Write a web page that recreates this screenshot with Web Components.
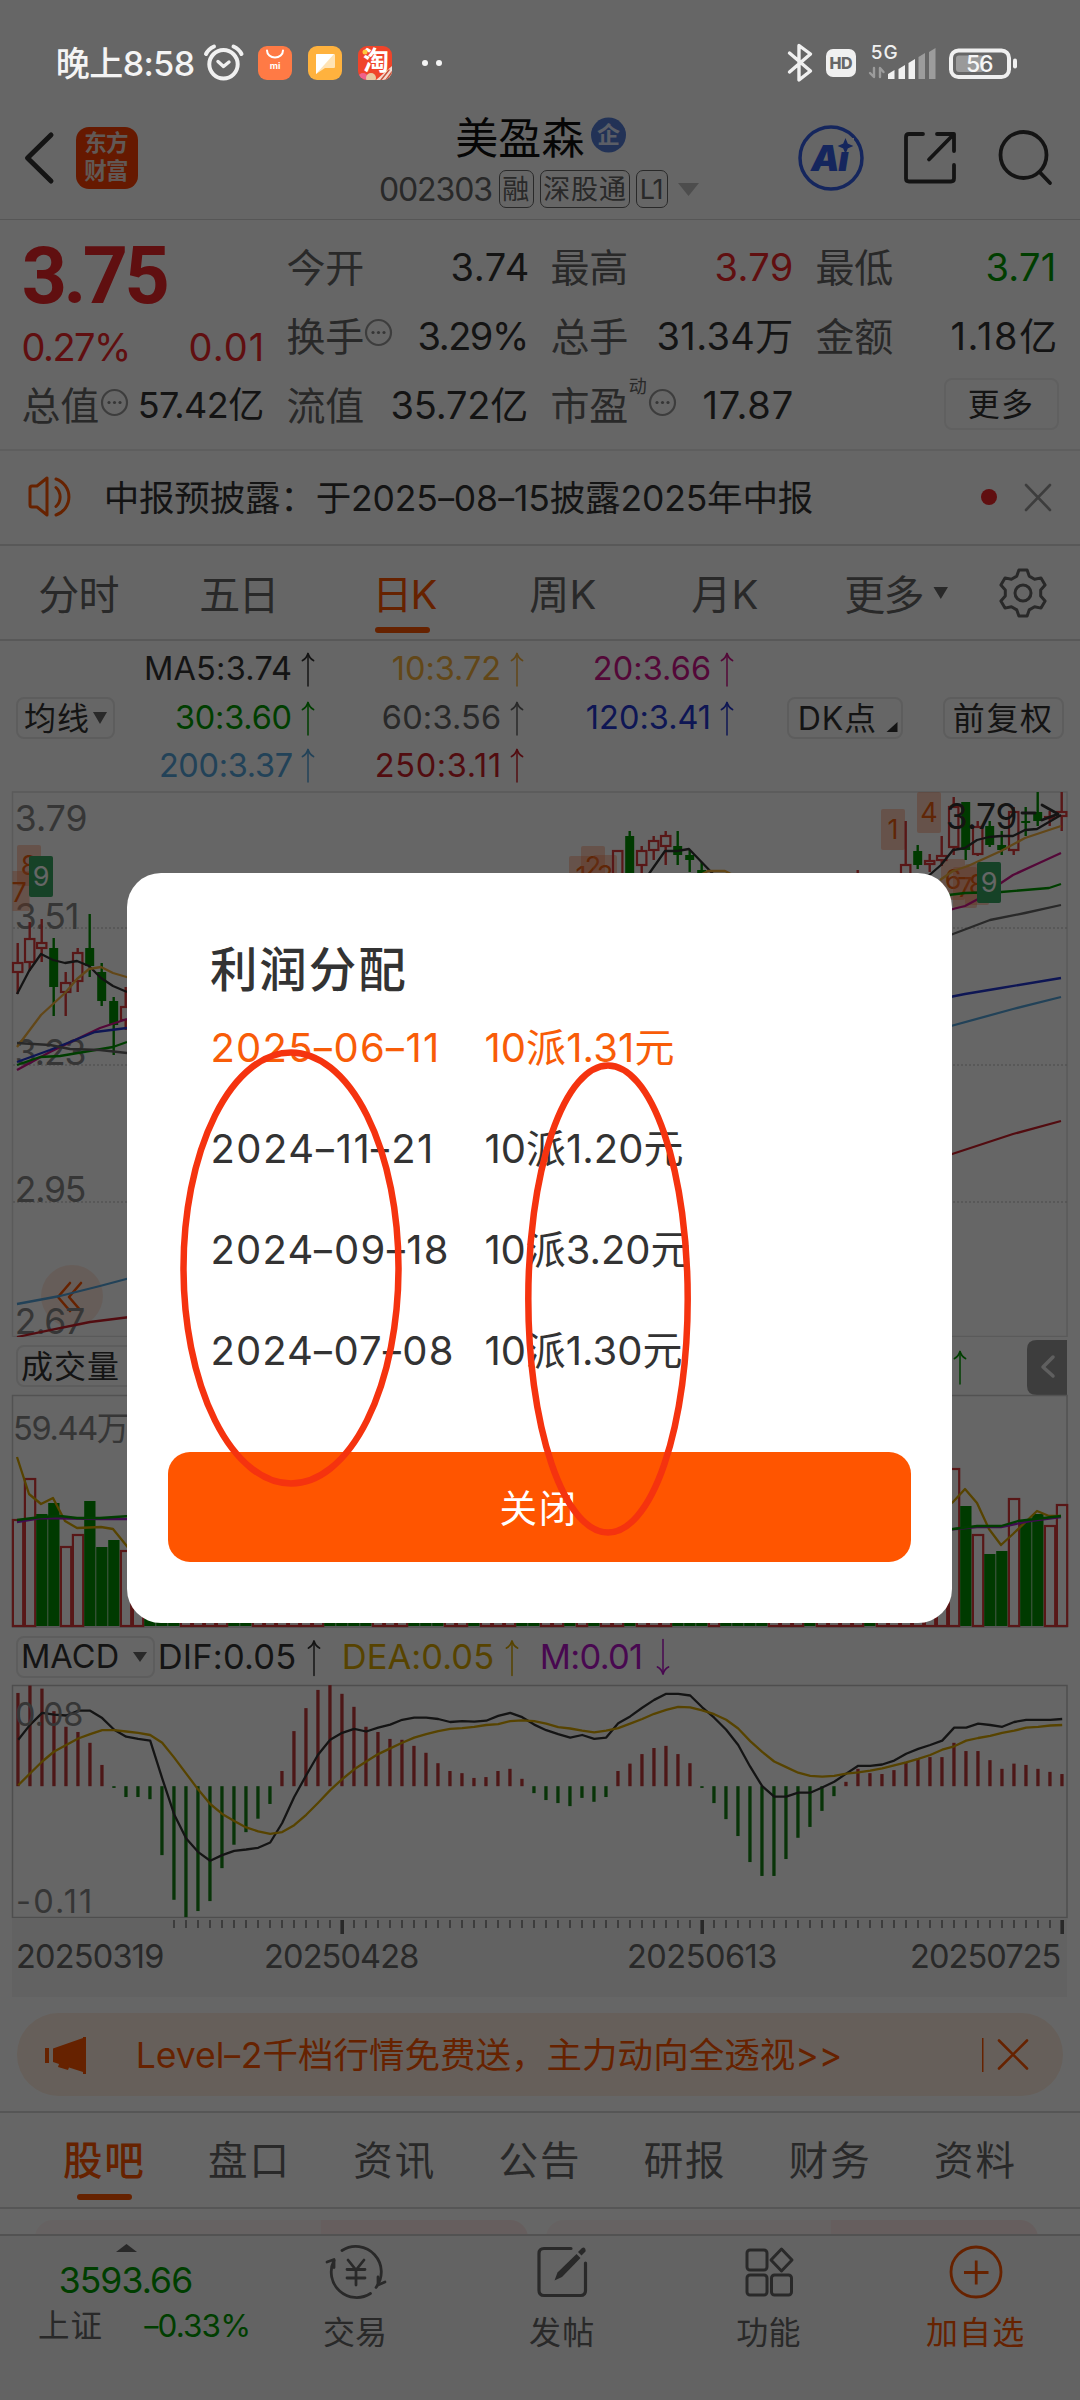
<!DOCTYPE html>
<html lang="zh-CN">
<head>
<meta charset="utf-8">
<title>美盈森 002303</title>
<style>
html,body{margin:0;padding:0;background:#fff}
body{width:1080px;height:2400px;overflow:hidden;font-family:Inter,"Noto Sans CJK SC",sans-serif}
</style>
</head>
<body>
<stock-page></stock-page>
<script>
const FONT = 'Inter,"Noto Sans CJK SC",sans-serif';
const INK='#333', SUB='#666', RED='#f0262a', GREEN='#009c00', ORANGE='#ff5500', YEL='#f5b13d', GOLD='#d9a800',
      PINK='#d0148c', BLUE='#2337d2', SKY='#55a5dc', CRIM='#cc1f2a', LAB='#888';

/* A run of text fitted to a given width by letter spacing */
class TRun extends HTMLElement {
  constructor(){ super(); this.attachShadow({mode:'open'}).innerHTML =
    `<style>:host{display:block;flex:none;white-space:nowrap;font-family:${FONT};line-height:1;font-variant-ligatures:none}span{display:inline-block}</style><span><slot></slot></span>`; }
  connectedCallback(){
    const span=this.shadowRoot.querySelector('span'), w=+this.getAttribute('w');
    const n=[...this.textContent].length;
    if(n>1) span.style.letterSpacing=((w-span.getBoundingClientRect().width)/(n-1)).toFixed(3)+'px';
  }
}
customElements.define('t-run',TRun);

/* T: text item, G: drawing item, B: boxed button item; row() lays them along a line */
const wide=t=>t.replace(/-/g,'<b style="display:inline-block;font-weight:inherit;transform:scaleX(1.4)">-</b>');
const T=(t,x,w,s,c=INK,o={})=>({x:x-.065*s,w:w+.1*s,f:()=>`<t-run w="${w+.1*s}" style="width:${w+.1*s}px;font-size:${s}px;color:${c};font-weight:${o.b||400};margin-top:${2*(o.dy??1)}px${o.ff?';font-family:'+o.ff:''}">${wide(t)}</t-run>`});
const G=(x,w,h,inner)=>({x,w,f:cy=>`<svg width="${w}" height="${h}" viewBox="${x} ${cy-h/2} ${w} ${h}">${inner}</svg>`});
const B=(x,w,h,inner)=>({x,w,f:cy=>`<div class="btn" style="width:${w}px;height:${h}px">${items(x+2,inner,cy)}</div>`});
function items(x0,list,cy){
  let e=x0; return list.map(i=>{const m=i.x-e; e=i.x+i.w; return `<div class="it" style="margin-left:${m.toFixed(2)}px;width:${i.w}px">${i.f(cy)}</div>`}).join('');
}
const row=(cy,h,list,x0=0)=>`<div class="row" style="height:${h}px">${items(x0,list,cy)}</div>`;
const CSS=`<style>:host{display:block;flex:none}*{box-sizing:border-box}.row{display:flex;align-items:center}.it{flex:none;display:flex;align-items:center}
svg{display:block;flex:none;overflow:visible}.btn{display:flex;align-items:center;border:2px solid #e8e8e8;border-radius:8px}
text{font-family:${FONT};font-variant-ligatures:none}</style>`;
const def=(name,html,css='')=>customElements.define(name,class extends HTMLElement{
  constructor(){super();this.attachShadow({mode:'open'}).innerHTML=CSS+`<style>${css}</style>`+(typeof html==='function'?html():html);}
});
const P=(d,c,w=3,x='')=>`<path d="${d}" fill="none" stroke="${c}" stroke-width="${w}" stroke-linecap="round" stroke-linejoin="round" ${x}/>`;
const F=(d,c,x='')=>`<path d="${d}" fill="${c}" ${x}/>`;
const L=(p,c,w=2.3)=>`<polyline points="${p}" fill="none" stroke="${c}" stroke-width="${w}" stroke-linejoin="round"/>`;
const ST=(t,x,cy,w,s,c,b=400)=>`<text x="${x-.06*s}" y="${cy+.364*s}" font-size="${s}" fill="${c}" font-weight="${b}" textLength="${w+.1*s}">${t}</text>`;
const R=(x,y,w,h,c,r=0,o='')=>`<rect x="${x}" y="${y}" width="${w}" height="${h}" rx="${r}" fill="${c}" ${o}/>`;
const C=(x,y,r,c,w)=>`<circle cx="${x}" cy="${y}" r="${r}" fill="none" stroke="${c}" stroke-width="${w}"/>`;
const D=(x,y,r,c)=>`<circle cx="${x}" cy="${y}" r="${r}" fill="${c}"/>`;

/* ---------- system status bar ---------- */
def('status-bar',()=>row(63,126,[
  T('晚上8:58',58,136,34,'#f4f4f4',{b:500}),
  G(203,42,44,C(223.5,64.3,14.2,'#f0f0f0',4)+P('M218 61.5l5.5 5 5.5-4.5','#f0f0f0',3.4)+P('M206 54q2.5-5 8-7.5M241.500 54q-2.500-5-8-7.500','#f0f0f0',4)),
  G(258,34,34,R(258,46,34,34,'#ff7a45',9)+P('M267 50.500a8 7 0 0 0 16 0','#fff',2)+`<text x="275" y="69" font-size="9" font-weight="700" text-anchor="middle" fill="#fff">mi</text>`),
  G(308,34,34,R(308,46,34,34,'#ffb23e',9)+F('M316 55q0-1 1-1h17q1 0 1 1v12q0 1-1 1h-9l-9 6z','#ffe3b5')+F('M316 55q0-1 1-1h17l-18 20z','#fff')),
  G(358,34,34,`<clipPath id="tb"><rect x="358" y="46" width="34" height="34" rx="9"/></clipPath><g clip-path="url(#tb)">`+R(358,46,34,34,'#f0442a')+D(363,78,5,'#f0628a')+D(371,78,5,'#e8c8a0')+F('M376 80l16-14v14z','#f3d9cf')+P('M381 80l8-10M386 80l6-8','#c8553c',1.500)+`</g><text x="376" y="69.500" font-size="26" font-weight="600" text-anchor="middle" fill="#fff">淘</text>`+D(365,52,2.500,'#ffc83d')),
  G(421,22,8,D(425,63,3,'#f4f4f4')+D(439,63,3,'#f4f4f4')),
  G(787,26,42,P('M789.500 53L810.500 71 799 80V45.500L810.500 54 789.500 72','#f0f0f0',3.400)),
  G(826,30,28,R(826,49,30,28,'#f0f0f0',7)+`<text x="829.500" y="68.800" font-size="16" font-weight="800" fill="#666" textLength="23">HD</text>`),
  G(868,68,48,ST('5G',872,52,25,19,'#f0f0f0',500)+
    P('M874 68v9l-4-4M880 77v-9l3.500 4','#9c9c9c',2.400)+
    [[888,71],[898.500,66],[908.500,60]].map(a=>F(`M${a[0]} 79V${a[1]+3}l6.500-4V79z`,'#f0f0f0')).join('')+
    [[918.500,54],[929,49]].map(a=>F(`M${a[0]} 79V${a[1]+3}l6.500-4V79z`,'#9c9c9c')).join('')),
  G(949,69,31,`<rect x="951" y="50" width="58" height="26.500" rx="7.500" fill="none" stroke="#f0f0f0" stroke-width="4"/>`+R(956,55,28,16.500,'#9a9a9a',3)+R(1013,58,4,10,'#f0f0f0',2)+ST('56',967.500,63.500,25,23,'#f6f6f6',500))
]),`:host{position:absolute;left:0;top:0;width:1080px;height:126px}`);

/* ---------- title bar ---------- */
const tag=(x,w,t,tx,tw)=>({x,w,f:cy=>`<div class="tag" style="width:${w}px">${items(x+1.5,[T(t,tx,tw,27,SUB,{dy:0})],cy)}</div>`});
def('title-bar',()=>`<div class="bar"><div class="side">${row(158,122,[
  G(24,32,52,P('M51 135L27.500 158 51 181',INK,5)),
  G(76,62,62,R(76,127,62,62,'#ff4000',13)+ST('东方',85.500,143,42,22.5,'#f2ddd5',700)+ST('财富',85.500,171,42,22.5,'#f2ddd5',700))
])}</div><div class="mid">${row(137,80,[
  T('美盈森',458,125,43,'#111'),
  G(591,36,36,D(608.500,135,17.500,'#557ed8')+`<text x="608.500" y="143" font-size="23" font-weight="600" text-anchor="middle" fill="#e4ecff">企</text>`)
],370)}${row(189,24,[T('002303',381,111,32,SUB),tag(499.500,35,'融',504.500,25),tag(540,90,'深股通',545.500,80),tag(636,32,'L1',642,21),G(678,21,14,F('M678 183h21l-10.500 13z','#c0c0c0'))],370)}</div><div>${row(158,122,[
  G(800,62,64,C(831,158,31,'#3560e8',3.500)+`<text x="811" y="170.500" font-size="36" font-weight="900" font-style="italic" fill="#3560e8" textLength="38">Ai</text>`+R(836,138,18,14,'#fff')+F('M845.500 140l1.800 4.200 4.200 1.800-4.200 1.800-1.800 4.200-1.800-4.200-4.200-1.800 4.200-1.800z','#3560e8','stroke="#3560e8" stroke-width="1.500"')),
  G(904,52,52,P('M923 134H909q-3 0-3 3V178.500q0 3 3 3H951q3 0 3-3V165M937 134H954V151M953 135L929 159.500',INK,3.800)),
  G(998,54,54,C(1023.500,155,23,INK,3.800)+P('M1040 172.500L1050 183',INK,3.800))
],720)}</div></div>`,
`:host{height:220px;padding-top:97px;border-bottom:1.500px solid #d6d6d6}.bar{display:flex;height:121px}.side{width:370px}.mid{width:350px}.tag{display:flex;align-items:center;height:38px;border:1.500px solid #666;border-radius:7px}`);

/* ---------- quote ---------- */
const dots=(x,y)=>G(x-13.500,27,27,C(x,y,12.500,'#999',2.200)+D(x-5.500,y,1.600,'#888')+D(x,y,1.600,'#888')+D(x+5.500,y,1.600,'#888'));
def('quote-panel',()=>`<div class="q"><div class="l">${row(277,114,[T('3.75',27,140,79,RED,{b:700,ff:'Roboto',dy:-1})])}${row(346,24,[T('0.27%',24,106,38,RED),T('0.01',191,72,38,RED)])}${row(404,92,[T('总值',24,74,39,SUB),dots(115,402),T('57.42亿',140,123,36,INK)])}</div>
<div>${row(266,92,[T('今开',289,74,39,SUB),T('3.74',453,75,38),T('最高',553,74,39,SUB),T('3.79',717,75,38,RED),T('最低',818,74,39,SUB),T('3.71',988,67,38,GREEN)],276)}
${row(335,46,[T('换手',289,74,39,SUB),dots(379,332),T('3.29%',420,108,38),T('总手',553,74,39,SUB),T('31.34万',659,133,38),T('金额',818,74,39,SUB),T('1.18亿',953,103,38)],276)}
${row(404,92,[T('流值',289,74,39,SUB),T('35.72亿',393,134,38),T('市盈',553,74,39,SUB),T('动',630,17,18,SUB,{dy:-17}),dots(663,402),T('17.87',705,87,38),B(944,115,52,[T('更多',970,62,32)])],276)}</div></div>`,
`:host{height:229px}.q{display:flex}.l{width:276px}.btn{border-color:#f0f0f0}`);

/* ---------- notice ---------- */
def('notice-bar',()=>row(498,94,[
  G(28,48,40,P('M30 488q0-2 2-2h5l10-8V515l-10-8h-5q-2 0-2-2z',ORANGE,3)+P('M56 487.500a13 13 0 0 1 0 19M56 479a19 19 0 0 1 0 36',ORANGE,3)),
  T('中报预披露：于2025-08-15披露2025年中报',106,706,35.500),
  G(981,16,16,D(989,497,8,RED)),
  G(1025,26,28,P('M1026 485l24 25M1050 485l-24 25','#999',2.600))
]),`:host{height:97px;border-top:2px solid #ececec;border-bottom:2px solid #dcdcdc}`);

/* ---------- chart period tabs ---------- */
const gear=()=>{let p='';for(let k=0;k<6;k++){const a=-90+60*k;for(const [r,d] of [[18,-20],[23.500,-10],[23.500,10],[18,20]]){const t=(a+d)*Math.PI/180;p+=(p?'L':'M')+(1023+r*Math.cos(t)).toFixed(1)+' '+(593+r*Math.sin(t)).toFixed(1);}}return P(p+'z',SUB,3)+C(1023,593,8,SUB,3)};
def('period-tabs',()=>row(586,80,[
  T('分时',41,77,41,SUB,{dy:9}),T('五日',202,76,41,SUB,{dy:9}),T('日K',375,61,40,ORANGE,{dy:9}),T('周K',532,63,40,SUB,{dy:9}),T('月K',694,63,40,SUB,{dy:9}),T('更多',847,76,41,SUB,{dy:9}),
  G(933,15,24,F('M933.500 587h14.500l-7.200 12z',SUB)),G(997,52,80,gear())
])+row(630,8,[G(375,55,6,R(375,627,55,6,ORANGE,3))]),`:host{height:95px;border-bottom:2px solid #dcdcdc}`);

/* ---------- moving averages ---------- */
const arr=(x,cy,c,h=34,down=0)=>G(x-8,16,h,`<g transform="${down?`rotate(180 ${x} ${cy})`:''}">`+P(`M${x} ${cy-h/2+2}V${cy+h/2}`,c,1.500)+P(`M${x-5.500} ${cy-h/2+8.500}q4-2 5.500-7 1.500 5 5.500 7`,c,1.800)+'</g>');
def('ma-legend',()=>row(668,55,[T('MA5:3.74',146,145,32.500),arr(308,668,INK),T('10:3.72',394,106,32.500,YEL),arr(517,668,YEL),T('20:3.66',595,115,32.500,PINK),arr(727,668,PINK)])
+row(717,43,[B(16,99,42,[T('均线',26,62,32),G(93,14,14,F('M93 711h14l-7 12z',SUB))]),T('30:3.60',177,114,32.500,GREEN),arr(308,717,GREEN),T('60:3.56',384,116,32.500,SUB),arr(517,717,SUB),T('120:3.41',588,122,32.500,BLUE),arr(727,717,BLUE),
  B(787,116,42,[T('DK点',800,75,32),G(887,11,22,F('M897.500 721v10h-11z',INK))]),B(943,121,42,[T('前复权',955,96,32)])])
+row(766,52,[T('200:3.37',161,131,32.500,SKY),arr(308,766,SKY),T('250:3.11',377,123,32.500,CRIM),arr(517,766,CRIM)]),
`:host{height:150px}`);

/* ---------- candlestick chart ---------- */
const X=i=>17.7+12*i;
const CR='#dc3a3a', CG='#009200';
function candle(i,red,w0,w1,b0,b1){const x=X(i);
  return red? P(`M${x} ${w0}V${b0}M${x} ${b1}V${w1}`,CR,2.400,'style="stroke-linecap:butt"')+`<rect x="${x-4.700}" y="${b0+1}" width="9.400" height="${Math.max(b1-b0-2,1)}" fill="none" stroke="${CR}" stroke-width="2.200"/>`
  : P(`M${x} ${w0}V${w1}`,CG,2.400,'style="stroke-linecap:butt"')+R(x-4.500,b0,9,b1-b0,CG);}
const badge=(x,y,t,g)=>R(x,y,24,41,g?'#37a563':'#ff8250',2,g?'':'opacity=".4"')+`<text x="${x+12}" y="${y+30}" font-size="27" text-anchor="middle" fill="${g?'#fff':'#f06010'}">${t}</text>`;
def('k-chart',()=>{
  let s=`<svg width="1080" height="546" viewBox="0 791 1080 546" style="overflow:hidden">`;
  s+=`<rect x="12.500" y="792" width="1054.500" height="544.500" fill="none" stroke="#e0e0e0" stroke-width="1.500"/>`;
  for(const y of [928,1065,1202]) s+=`<path d="M13 ${y}H1067" stroke="#bbb" stroke-width="1" stroke-dasharray="2 2"/>`;
  s+=`<circle cx="72" cy="1296" r="31" fill="#ffc8af" opacity=".4"/>`+P('M70 1283l-12 14 12 14M81 1283l-12 14 12 14',ORANGE,2.600);
  [[17,818,69,'3.79'],[17,916,61,'3.51'],[17,1052,68,'3.23'],[17,1189,68,'2.95'],[17,1321,67,'2.67']].forEach(a=>s+=ST(a[3],a[0],a[1],a[2],35.500,LAB));
  s+=badge(17,845,'8')+R(12.500,871,17,40,'#ff8250',0,'opacity=".4"')+`<text x="11.500" y="901.500" font-size="27" fill="#f06010">7</text>`;
  s+=badge(569,856,'1')+badge(581,846,'2')+badge(593,855,'3')+badge(881,809,'1')+badge(917,792,'4')+badge(941,859,'6')+badge(953,867,'7')+badge(965,864,'8');
  [[0,1,943,994,962,973],[1,1,922,971,938,963],[2,1,919,962,942,949],[3,0,938,1016,948,987],[4,1,972,1016,982,993],[5,1,948,992,952,982],[6,0,914,977,948,966],[7,0,963,1006,972,1001],[8,0,997,1055,1001,1025],[9,1,987,1030,1006,1021],
   [50,1,850,890,850,890],[51,0,831,890,836,890],[52,1,846,880,850,866],[53,1,836,860,840,851],[54,1,831,865,835,847],[55,0,831,865,846,855],[56,0,850,872,855,860],[57,0,862,880,870,880],[70,1,870,890,880,890],
   [74,1,821,890,864,890],[75,0,845,869,851,865],[76,1,854,872,860,865],[77,1,836,866,855,861],[78,1,797,855,806,848],[79,0,802,860,802,850],[80,1,821,856,826,855],[81,0,821,847,826,845],[82,0,831,855,845,850],[83,1,807,855,811,851],[84,0,807,836,821,823],[85,0,792,826,812,821],[86,1,811,826,816,818],[87,1,792,831,811,817]
  ].forEach(a=>s+=candle(...a));
  s+=L('17,994 29,971 41,954 53,960 65,963 77,961 89,966 101,978 113,986 127,992',INK)+L('17,1047 41,1015 65,993 77,979 89,969 101,967 113,973 130,978',YEL)
   +L('17,1070 50,1052 100,1028 127,1019',PINK)+L('17,1062 50,1050 95,1032 127,1028',BLUE)+L('17,1065 40,1057 60,1056 113,1047 127,1042',GREEN)+L('17,1043 50,1045 70,1049 100,1050 127,1053',SUB)
   +L('17,1304 60,1296 100,1286 130,1278',SKY)+L('17,1337 50,1330 90,1322 130,1317',CRIM)
   +L('646,878 665,851 677,851 689,849 715,876',INK)+L('700,875 708,871 725,871 735,876',YEL)
   +L('926,878 941,865 953,850 965,848 977,840 989,837 1001,836 1013,836 1025,830 1037,829 1049,822 1061,815',INK)+L('940,880 953,871 968,866 1001,851 1025,838 1061,826',YEL)
   +L('940,914 953,909 965,906 980,898 1001,883 1013,875 1037,864 1061,853',PINK)+L('940,896 965,893 1001,892 1037,889 1049,888 1061,884',GREEN)+L('940,939 953,934 990,920 1025,913 1061,905',SUB)
   +L('940,999 965,994 1001,988 1061,978',BLUE)+L('940,1029 1013,1009 1061,997',SKY)+L('940,1158 1013,1134 1061,1121',CRIM);
  s+=badge(29,856,'9',1)+badge(977,862,'9',1)+ST('3.79',948,816,68,35.500,INK)+P('M1022 813H1035M1042 805L1058 814 1042 820',INK,2.800);
  return s+'</svg>';
});

/* ---------- volume ---------- */
def('volume-chart',()=>{
  let s=row(1366,58,[B(16,140,42,[T('成交量',23,95,32)]),arr(960,1367,GREEN),G(1027,40,56,F('M1067 1340h-30q-10 0-10 9v37q0 9 10 9h30z','#999')+P('M1053 1357l-10 10 10 9','#eee',3.500))]);
  s+=`<svg width="1080" height="233" viewBox="0 1395 1080 233"><rect x="12.500" y="1395.500" width="1054.500" height="231.500" fill="none" stroke="#ccc" stroke-width="1.500"/>`;
  s+=ST('59.44万',15,1428,113,32.500,LAB);
  const pat='RRGGRRGGGRRGGGRRRRGGRRRRRRGGGGRRRGGGRRGRRRGGRRGRGRRGRRRGGGRGGGGRRRGRRRRGRRRRRRRGRGGRGGRR';
  const top={0:1519,1:1478,2:1514,3:1503,4:1546,5:1534,6:1501,7:1547,8:1540,9:1550,77:1590,78:1468,79:1506,80:1534,81:1554,82:1551,83:1498,84:1521,85:1514,86:1525,87:1504};
  [...pat].forEach((c,i)=>{if(i>87)return;const y=top[i]||1575,x=X(i)+.2;s+=c==='R'?`<rect x="${x-5}" y="${y+1}" width="10.300" height="${1625-y}" fill="none" stroke="${CR}" stroke-width="2.200"/>`:R(x-5.700,y,11.300,1626-y,CG);});
  s+=L('17,1457 29,1494 41,1504 53,1498 65,1521 77,1528 101,1527 113,1529 130,1550',GOLD)+L('17,1522 41,1518 100,1519 130,1519','#a01ec8')+L('17,1520 41,1517 60,1516 77,1518 100,1518 130,1516',GREEN)
   +L('945,1507 953,1502 965,1489 977,1503 989,1529 1001,1545 1013,1534 1037,1511 1049,1516 1061,1516',GOLD)+L('945,1530 977,1527 1001,1527 1030,1521 1061,1517','#a01ec8')+L('945,1530 977,1526 1001,1526 1018,1521 1061,1516',GREEN);
  return s+'</svg>';
});

/* ---------- MACD ---------- */
def('macd-chart',()=>{
  const Y=v=>1320+v/2.306;
  const bars=[860,843,850,902,938,950,975,1026,1079,1100,1100,1105,1234,1337,1377,1363,1340,1264,1210,1181,1150,1116,1040,948,895,853,842,862,892,938,950,966,968,982,998,1022,1040,1045,1056,1054,1040,1035,1058,1091,1107,1114,1121,1102,1111,1100,1040,1023,1001,987,982,1001,1022,1079,1114,1151,1190,1250,1282,1282,1243,1194,1169,1132,1098,1065,1035,1045,1047,1038,1019,1012,1008,1008,975,994,994,1015,1035,1023,1026,1035,1042,1047];
  const dif=[968,933,906,910,912,901,901,918,945,961,966,970,1057,1140,1196,1227,1247,1234,1224,1221,1217,1205,1160,1100,1050,1002,968,952,943,949,940,933,922,917,917,920,927,925,926,924,913,906,916,933,946,955,963,957,966,963,930,914,894,876,862,862,866,893,917,945,980,1030,1075,1099,1099,1090,1090,1078,1065,1046,1028,1028,1025,1016,1000,989,980,970,940,940,931,934,938,927,922,922,922,920];
  const dea=[1073,1045,1018,995,980,965,955,946,946,949,952,957,975,1009,1046,1083,1116,1139,1155,1170,1179,1185,1181,1165,1141,1113,1084,1059,1036,1018,1001,988,975,963,955,948,943,941,938,934,932,925,923,925,931,939,942,947,951,947,941,931,920,908,899,892,893,900,909,922,942,971,996,1018,1031,1044,1051,1053,1051,1046,1043,1039,1034,1027,1020,1012,1003,991,983,970,964,959,952,947,940,938,935,934];
  const poly=(a,c)=>L((a.length===88?a:[...a.slice(0,56),892,...a.slice(56)]).map((v,i)=>(X(i)+.5).toFixed(1)+','+Y(v).toFixed(1)).join(' '),c);
  let s=row(1656.5,57,[B(16,139,42,[T('MACD',23,95,32.500),G(133,14,12,F('M133 1651.500h14l-7 10z',SUB))]),T('DIF:0.05',160,135,34.500),arr(314,1657,INK,36),T('DEA:0.05',344,149,34.500,GOLD),arr(512,1657,GOLD,36),T('M:0.01',542,100,34.500,'#b414c8'),arr(663,1657,'#b414c8',36,1)]);
  s+=`<svg width="1080" height="233" viewBox="0 1685 1080 233"><rect x="12.500" y="1685.500" width="1054.500" height="232" fill="none" stroke="#c4c4c4" stroke-width="1.500"/>`;
  bars.forEach((v,i)=>{const y=Y(v),z=1786.200;s+=v<1075?R(X(i)-1.400,y,3.300,z-y,'#c03a3a'):R(X(i)-1.400,z,3.300,y-z,'#148214');});
  s+=poly(dif,INK)+poly(dea,GOLD);
  s+=ST('0.08',17,1714,65,32.500,LAB)+ST('-0.11',18,1901,73,32.500,LAB)+'</svg>';
  s+=`<svg width="1080" height="79" viewBox="0 1918 1080 79">`+R(12,1918,1055,79,'#f6f6f6');
  for(let i=13;i<88;i++){const m=i===27||i===57||i===87;s+=R(X(i)-(m?1.300:.7),1920,m?3.600:2,m?14:8,m?'#666':'#999');}
  [[18,145,'20250319'],[266,152,'20250428'],[629,147,'20250613'],[912,148,'20250725']].forEach(a=>s+=ST(a[2],a[0],1956,a[1],32.500,SUB));
  return s+'</svg>';
});

/* ---------- promotion ---------- */
def('promo-strip',()=>`<div class="p">${row(2055,83,[
  G(45,42,40,F('M45 2048h4v15h-4zM53 2048.500L83 2038v-1h3v37h-3v-2l-14-4.500-1 2.500-10-3 1-3-6-2z',ORANGE)),
  T('Level-2千档行情免费送，主力动向全透视>>'.replace(/>/g,'&gt;'),138,703,35.500,ORANGE,{dy:1.5}),
  G(981,3,34,R(982,2038,1.500,34,ORANGE)),G(998,30,32,P('M999 2040.500l28 28M1027 2040.500l-28 28',ORANGE,2.600))
],17)}</div>`,`:host{height:116px;padding:16px 17px 15px;border-bottom:2px solid #d6d6d6}.p{background:#ffeee0;border-radius:42px}`);

/* ---------- content tabs ---------- */
def('content-tabs',()=>row(2153,80,['股吧','盘口','资讯','公告','研报','财务','资料'].map((t,i)=>T(t,65.500+145.200*i,77,39.500,i?SUB:ORANGE,{dy:9,b:i?400:500})))
 +row(2197,8,[G(77,55,6,R(77,2194,55,6,ORANGE,3))])
 +`<div class="sp"></div><div class="ln"></div><div class="cards"><i></i><i></i></div>`,
`:host{height:121px}.sp{height:6px}.ln{height:2px;background:#d6d6d6}.cards{display:flex;gap:18px;padding:11px 42px 0 35px;height:25px;overflow:hidden}
i{flex:1;height:60px;border-radius:18px;background:linear-gradient(90deg,#fff6f4 0 58%,#ffecea 58%)}`);

/* ---------- bottom bar ---------- */
const nav=(x,w,icon,t,c=SUB)=>`<div class="n">${row(2272,72,[G(x-32,64,60,icon)],x-67.500)}${row(2333,48,[T(t,x-w/2,w,32,c)],x-67.500)}</div>`;
def('bottom-bar',()=>`<div class="b"><div class="idx">${row(2247.500,24,[G(116,21,8,F('M116 2251.500h21l-10.500-8z',SUB))])}${row(2281,42,[T('3593.66',61,131,35.500,GREEN,{dy:0})])}${row(2325,45,[T('上证',40,61,31.500,SUB),T('-0.33%',146,104,31.500,GREEN)])}</div>
${nav(355.5,61,P('M341.500 2250.500a25.500 25.500 0 0 1 34 37M370 2293.500a25.500 25.500 0 0 1-36.500-33','#666',2.800)+P('M326.500 2262l7-2.500v8M384.500 2282l-7 3v-8','#666',2.800)+P('M347.500 2260l8 10 8-10M355.500 2270v15M346.500 2269.500h18M346.500 2278h18','#666',2.800),'交易')}<div class="g"></div>
${nav(562,62,P('M571 2248.500H544q-5 0-5 5V2290.500q0 5 5 5H580.500q5 0 5-5V2263','#666',3.200)+F('M554.500 2280.500l3-8 19-18.500 4 4-18.500 19z','#666')+F('M578 2252l4-4q2-1 3 .5t.5 3l-4 4z','#666'),'发帖')}<div class="g"></div>
${nav(769,61,[[747,2250],[747,2275],[771.5,2275]].map(a=>`<rect x="${a[0]}" y="${a[1]}" width="20" height="20" rx="3" fill="none" stroke="#666" stroke-width="3"/>`).join('')+P('M781.500 2249l10.500 11-10.500 11-10.500-11z','#666',3),'功能')}<div class="g"></div>
${nav(976,95,C(976,2272,25,ORANGE,2.800)+P('M964 2272.500h24.500M976.200 2260.500v24',ORANGE,2.800,'style="stroke-linecap:butt"'),'加自选',ORANGE)}</div>`,
`:host{height:166px;border-top:2px solid #ccc;background:#f8f8f8}.b{display:flex}.idx{width:288px;display:block}.n{width:135px;display:block}.g{width:71.700px}`);

/* ---------- dialog ---------- */
def('dividend-dialog',()=>`<div class="card">${row(969.5,55,[T('利润分配',213,191,47.500,INK,{b:500,dy:0})],127)}${
 [['2025-06-11',225,'10派1.31元',186,'#f85c08'],['2024-11-21',219,'10派1.20元',195,INK],['2024-09-18',234,'10派3.20元',202,INK],['2024-07-08',239,'10派1.30元',194,INK]].map((r,i)=>row(1048+101*i,101,[T(r[0],213,r[1],40,r[4],{dy:.5}),T(r[2],487,r[3],40,r[4],{dy:.5})],127)).join('')}
 <div class="close">${row(1507,110,[T('关闭',502,73,37.500,'#fff',{dy:2})],168)}</div></div>
 <svg class="mk" width="1080" height="2400"><g fill="none" stroke="#f5330f" stroke-width="6.500"><ellipse cx="291" cy="1268" rx="107.500" ry="215.500"/><ellipse cx="608" cy="1299" rx="79.700" ry="233.500"/></g></svg>`,
`:host{position:absolute;inset:0;background:rgba(0,0,0,.6);padding:873px 0 0 127px;box-sizing:border-box}
.card{width:825px;height:750px;background:#fff;border-radius:34px;padding-top:69px}
.close{margin:50.500px 41px 0;background:#ff5500;border-radius:22px;height:110px}.mk{position:absolute;left:0;top:0}`);

def('stock-page',`<title-bar></title-bar><quote-panel></quote-panel><notice-bar></notice-bar><period-tabs></period-tabs><ma-legend></ma-legend><k-chart></k-chart><volume-chart></volume-chart><macd-chart></macd-chart><promo-strip></promo-strip><content-tabs></content-tabs><bottom-bar></bottom-bar><dividend-dialog></dividend-dialog><status-bar></status-bar>`,
`:host{display:flex;flex-direction:column;position:relative;width:1080px;height:2400px;overflow:hidden;background:#fff}title-bar,notice-bar,period-tabs,promo-strip,bottom-bar{box-sizing:border-box}`);
</script>
</body>
</html>
